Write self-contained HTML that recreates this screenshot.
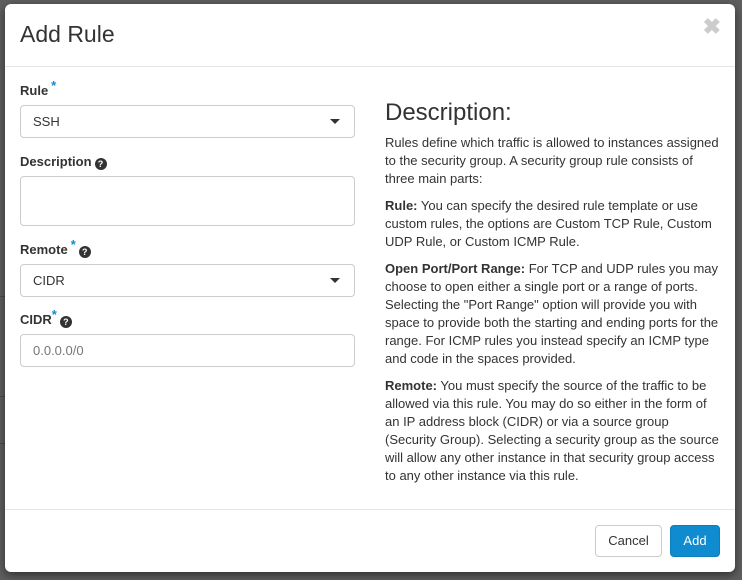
<!DOCTYPE html>
<html><head><style>
*{box-sizing:border-box;margin:0;padding:0}
body{width:742px;height:580px;background:#5e5e5e;font-family:"Liberation Sans",sans-serif;color:#333;position:relative;overflow:hidden;font-size:13px}
.bgline{position:absolute;left:0;width:5px;height:1px;background:#4a4a4a}
.modal{position:absolute;left:5px;top:4px;width:730px;height:568px;background:#fff;border-radius:6px;box-shadow:0 3px 9px rgba(0,0,0,.5)}
.hdr{height:63px;border-bottom:1px solid #e5e5e5;position:relative}
.hdr h4{position:absolute;left:15px;top:17px;font-size:23px;font-weight:normal;color:#333}
.close{position:absolute;right:14px;top:10px;font-size:22px;color:#ccc;font-weight:bold}
.lab{position:absolute;left:15px;font-weight:bold;font-size:13px;line-height:15px;color:#333;white-space:nowrap}
.star{color:#0f8bd0;font-size:13px;position:relative;top:-5px;margin-left:3px}
.q{display:inline-block;width:12px;height:12px;border-radius:50%;background:#333;color:#fff;font-size:9px;text-align:center;line-height:12px;font-weight:bold;vertical-align:-1px;margin-left:3px}
.inp{position:absolute;left:15px;width:335px;height:33px;border:1px solid #ccc;border-radius:4px;padding:0 12px;line-height:31px;font-size:13px;color:#333}
.caret{position:absolute;right:14px;top:13px;width:0;height:0;border-left:5px solid transparent;border-right:5px solid transparent;border-top:5px solid #333}
.right{position:absolute;left:380px;top:96px;width:336px;font-size:13px;line-height:18px;color:#333}
.right h3{font-size:24px;font-weight:normal;margin-bottom:8px;line-height:26px}
.right p{margin-bottom:9px}
.ftr{position:absolute;left:0;top:505px;width:730px;border-top:1px solid #e5e5e5}
.btn{position:absolute;top:521px;height:32px;border-radius:4px;font-size:13px;line-height:30px;text-align:center}
</style></head><body>
<div class="bgline" style="top:296px"></div><div class="bgline" style="top:396px"></div><div class="bgline" style="top:443px"></div>
<div class="modal">
<div class="hdr"><h4>Add Rule</h4><div class="close">✖</div></div>
<div class="lab" style="top:79px">Rule<span class="star">*</span></div>
<div class="inp" style="top:101px">SSH<div class="caret"></div></div>
<div class="lab" style="top:150px">Description<span class="q">?</span></div>
<div class="inp" style="top:172px;height:50px"></div>
<div class="lab" style="top:238px">Remote<span class="star">*</span><span class="q">?</span></div>
<div class="inp" style="top:260px">CIDR<div class="caret"></div></div>
<div class="lab" style="top:308px">CIDR<span class="star" style="margin-left:0">*</span><span class="q">?</span></div>
<div class="inp" style="top:330px;color:#777">0.0.0.0/0</div>
<div class="right">
<h3>Description:</h3>
<p>Rules define which traffic is allowed to instances assigned to the security group. A security group rule consists of three main parts:</p>
<p><b>Rule:</b> You can specify the desired rule template or use custom rules, the options are Custom TCP Rule, Custom UDP Rule, or Custom ICMP Rule.</p>
<p><b>Open Port/Port Range:</b> For TCP and UDP rules you may choose to open either a single port or a range of ports. Selecting the "Port Range" option will provide you with space to provide both the starting and ending ports for the range. For ICMP rules you instead specify an ICMP type and code in the spaces provided.</p>
<p><b>Remote:</b> You must specify the source of the traffic to be allowed via this rule. You may do so either in the form of an IP address block (CIDR) or via a source group (Security Group). Selecting a security group as the source will allow any other instance in that security group access to any other instance via this rule.</p>
</div>
<div class="ftr"></div>
<div class="btn" style="left:590px;width:67px;border:1px solid #ccc;color:#333">Cancel</div>
<div class="btn" style="left:665px;width:50px;background:#0f8bd0;border:1px solid #0c7dbb;color:#fff">Add</div>
</div>
</body></html>
